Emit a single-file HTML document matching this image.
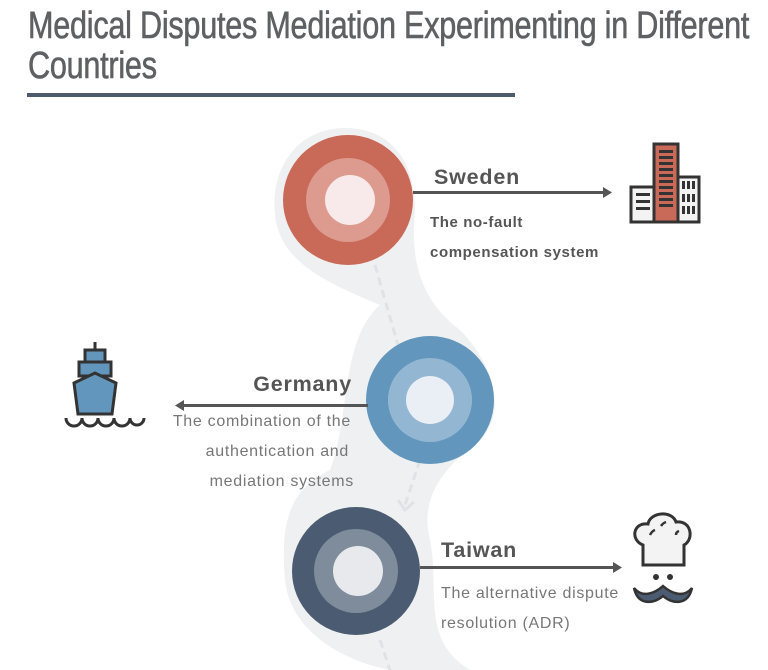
<!DOCTYPE html>
<html><head><meta charset="utf-8"><style>
html,body{margin:0;padding:0;background:#fff;width:768px;height:670px;overflow:hidden}
.t{position:absolute;left:28px;top:6px;font-family:"Liberation Sans",sans-serif;color:#5f6062;font-size:38px;line-height:40px;transform:scaleX(0.805);transform-origin:0 0;white-space:nowrap;letter-spacing:-0.3px;-webkit-text-stroke:0.6px #5f6062}
</style></head><body>
<div class="t">Medical Disputes Mediation Experimenting in Different<br>Countries</div>
<div style="position:absolute;left:27px;top:93px;width:488px;height:4px;background:#4d5b6b"></div>
<svg width="768" height="670" style="position:absolute;left:0;top:0" font-family="Liberation Sans, sans-serif">
<path d="M345 128 C300 128 270 165 275 215 C280 260 320 280 380 305 C340 340 350 420 330 470 C290 490 280 520 285 580 C290 630 340 660 390 670 L470 670 C420 640 440 590 430 540 C420 500 440 470 480 440 C510 410 490 360 460 330 C420 300 410 260 415 210 C415 160 390 128 345 128 Z" fill="#eff0f1"/>
<path d="M375 265 L408 380 M420 460 L405 505 M380 640 L390 670" stroke="#dfe2e6" stroke-width="3" stroke-dasharray="8 5" fill="none"/>
<path d="M398 500 l7 10 l9 -8" stroke="#dfe2e6" stroke-width="3" fill="none"/>
<circle cx="348" cy="200" r="65" fill="#c96a58"/><circle cx="348" cy="200" r="42" fill="#dd9a8f"/><circle cx="350" cy="200" r="25" fill="#f8eaea"/>
<circle cx="430" cy="400" r="64" fill="#6396bd"/><circle cx="430" cy="400" r="42" fill="#93b7d3"/><circle cx="430" cy="400" r="24" fill="#e9eff5"/>
<circle cx="356" cy="571" r="64" fill="#4b5c72"/><circle cx="356" cy="571" r="42" fill="#7f8c9b"/><circle cx="358" cy="571" r="25" fill="#e8e9ed"/>
<g fill="#555"><rect x="413" y="191" width="192" height="3"/><path d="M603 187 l9 5.5 l-9 5.5z"/>
<rect x="182" y="404" width="186" height="3"/><path d="M184 400 l-9 5.5 l9 5.5z"/>
<rect x="420" y="566" width="195" height="3"/><path d="M613 562 l9 5.5 l-9 5.5z"/></g>
<g fill="#555" font-weight="bold" letter-spacing="0.8"><text x="434" y="184" font-size="21.5">Sweden</text><text x="352" y="391" font-size="21.5" text-anchor="end">Germany</text><text x="441" y="557" font-size="21.5">Taiwan</text>
<text x="430" y="227" font-size="15" letter-spacing="0.6">The no-fault</text><text x="430" y="257" font-size="15" letter-spacing="0.6">compensation system</text></g>
<g fill="#777" font-size="16" letter-spacing="0.7"><text x="351" y="426" text-anchor="end">The combination of the</text><text x="349" y="456" text-anchor="end">authentication and</text><text x="354" y="486" text-anchor="end">mediation systems</text>
<text x="441" y="598">The alternative dispute</text><text x="441" y="628">resolution (ADR)</text></g>
<!-- buildings -->
<g stroke="#333" stroke-width="3"><rect x="631" y="187" width="23" height="35" fill="#f3f3f3"/><rect x="654" y="144" width="24" height="78" fill="#c96a58"/><rect x="678" y="177" width="21" height="45" fill="#f3f3f3"/></g>
<g fill="#333"><rect x="636" y="193" width="14" height="3"/><rect x="636" y="200" width="14" height="3"/><rect x="636" y="207" width="14" height="3"/>
<rect x="659" y="150" width="14" height="3"/><rect x="659" y="156" width="14" height="3"/><rect x="659" y="162" width="14" height="3"/><rect x="659" y="168" width="14" height="3"/><rect x="659" y="174" width="14" height="3"/><rect x="659" y="180" width="14" height="3"/><rect x="659" y="186" width="14" height="3"/><rect x="659" y="192" width="14" height="3"/><rect x="659" y="198" width="14" height="3"/><rect x="659" y="204" width="14" height="3"/>
<rect x="682" y="181" width="3" height="8"/><rect x="687" y="181" width="3" height="8"/><rect x="692" y="181" width="3" height="8"/><rect x="682" y="194" width="3" height="8"/><rect x="687" y="194" width="3" height="8"/><rect x="692" y="194" width="3" height="8"/><rect x="682" y="206" width="3" height="8"/><rect x="687" y="206" width="3" height="8"/><rect x="692" y="206" width="3" height="8"/></g>
<!-- ship -->
<g stroke="#333" stroke-width="3" fill="#6396bd"><rect x="85" y="350" width="20" height="12"/><rect x="79" y="362" width="32" height="14"/><path d="M74 383 L95 373 L116 383 L112 414 L78 414 Z"/></g>
<path d="M95 342 v8" stroke="#333" stroke-width="3"/>
<path d="M66 418 a8 8 0 0 0 16 0 a8 8 0 0 0 16 0 a8 8 0 0 0 16 0 a8 8 0 0 0 16 0 a7 7 0 0 0 14 0" stroke="#333" stroke-width="3" fill="none"/>
<!-- chef -->
<path d="M643 565 L643 545 C630 540 633 522 648 524 C650 512 672 510 676 522 C692 520 694 540 684 545 L684 565 Z" fill="#f3f3f3" stroke="#333" stroke-width="3"/>
<path d="M650 535 q2 -4 5 -5 M661 526 q2 -3 5 -4 M676 535 q0 -3 3 -4" stroke="#333" stroke-width="2.5" fill="none"/>
<circle cx="656" cy="577" r="3" fill="#333"/><circle cx="670" cy="577" r="3" fill="#333"/>
<path d="M634 588 C642 598 654 594 663 586 C672 594 684 598 692 588 C688 606 672 604 663 596 C654 604 638 606 634 588 Z" fill="#4b5c72" stroke="#333" stroke-width="2.5"/>
</svg>
</body></html>
